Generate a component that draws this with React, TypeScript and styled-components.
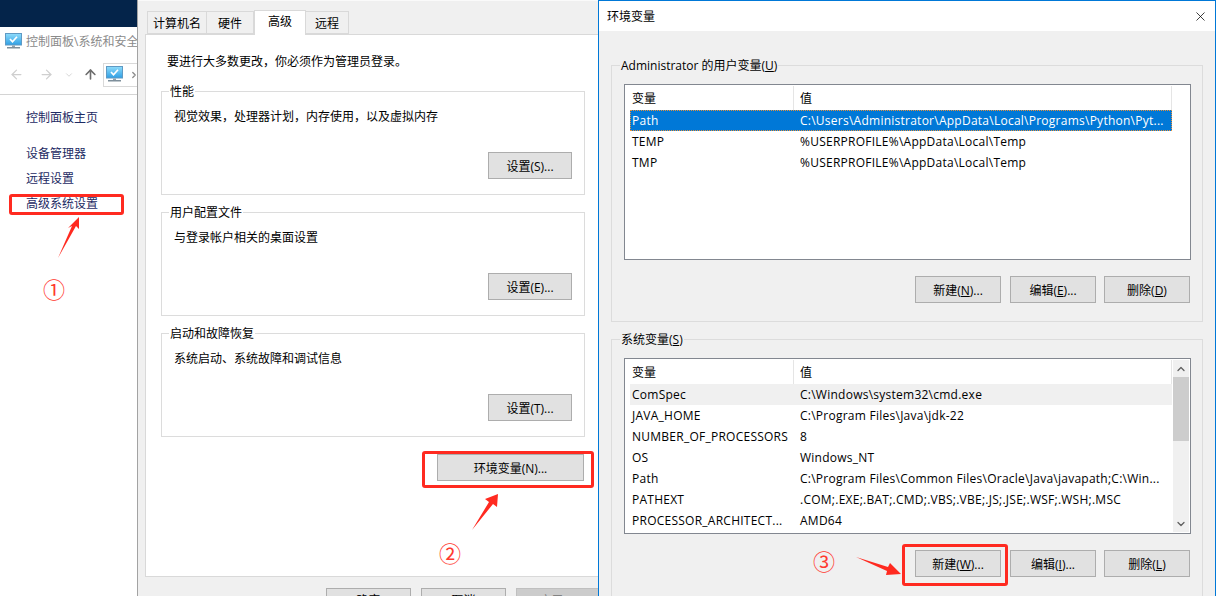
import React from 'react'
import styled, { createGlobalStyle } from 'styled-components'
import { ArrowLeft, ArrowRight, ArrowUp, ChevronDown, ChevronRight, ChevronUp, X } from 'lucide-react'

const GlobalStyle = createGlobalStyle`
  html, body {
    margin: 0;
    padding: 0;
    background: #fff;
  }
  * {
    box-sizing: border-box;
  }
  body {
    font-family: "Open Sans", "Noto Sans CJK SC", sans-serif;
    font-size: 12px;
    color: #000;
  }
`

const Page = styled.div`
  position: relative;
  display: flex;
  width: 1218px;
  height: 596px;
  overflow: hidden;
  background: #fff;
`

/* left: control panel */
const Sidebar = styled.aside`
  flex: none;
  width: 138px;
  border-right: 1px solid #a3a3a3;
  overflow: hidden;
`

const TopBar = styled.div`
  height: 27px;
  background: #04244a;
`

const TitleRow = styled.div`
  display: flex;
  align-items: center;
  gap: 4px;
  height: 28px;
  padding-left: 5px;
  color: #8a8a8a;
  white-space: nowrap;
`

const NavRow = styled.div`
  display: flex;
  align-items: center;
  height: 40px;
  padding-left: 9px;
  border-bottom: 1px solid #d4d4d4;
  color: #cfcfcf;
`

const NavButton = styled.span<{ $width: number; $left?: number; $dark?: boolean }>`
  display: flex;
  justify-content: center;
  width: ${p => p.$width}px;
  margin-left: ${p => p.$left ?? 0}px;
  flex: none;
  color: ${p => (p.$dark ? '#6d6d6d' : 'inherit')};
`

const Breadcrumb = styled.div`
  display: flex;
  align-items: center;
  gap: 6px;
  flex: none;
  width: 60px;
  height: 24px;
  margin-left: 5px;
  padding-left: 2px;
  border: 1px solid #d9d9d9;
  color: #8a8a8a;
`

const LinkList = styled.nav`
  display: flex;
  flex-direction: column;
  padding: 10px 0 0 26px;
`

const SideLink = styled.a<{ $gap?: number }>`
  height: 25px;
  line-height: 25px;
  margin-bottom: ${p => p.$gap ?? 0}px;
  color: #1d2a63;
  white-space: nowrap;
`

/* middle: system properties */
const Properties = styled.section`
  flex: none;
  display: flex;
  flex-direction: column;
  width: 460px;
  padding-left: 7px;
  background: #f0f0f0;
  border-top: 1px solid #fafafa;
  overflow: hidden;
`

const Tabs = styled.div`
  display: flex;
  flex: none;
  align-items: flex-end;
  height: 34px;
  padding-left: 2px;
  margin-bottom: -1px;
`

const Tab = styled.div<{ $width: number; $active?: boolean }>`
  position: relative;
  z-index: ${p => (p.$active ? 1 : 0)};
  display: flex;
  align-items: center;
  justify-content: center;
  flex: none;
  width: ${p => p.$width}px;
  height: ${p => (p.$active ? 25 : 23)}px;
  margin-bottom: ${p => (p.$active ? 0 : 1)}px;
  padding-bottom: ${p => (p.$active ? 4 : 0)}px;
  background: ${p => (p.$active ? '#fff' : '#f0f0f0')};
  border: 1px solid #d9d9d9;
  border-bottom: ${p => (p.$active ? 'none' : '1px solid #d9d9d9')};
  border-left: ${p => (p.$active ? '1px solid #d9d9d9' : 'none')};
  &:first-child {
    border-left: 1px solid #d9d9d9;
  }
`

const TabPage = styled.div`
  flex: none;
  height: 543px;
  width: 460px;
  padding: 16px 19px 0 15px;
  background: #fff;
  border: 1px solid #d9d9d9;
`

const Intro = styled.p`
  margin: 0 0 11px;
  padding: 1px 0 0 6px;
  line-height: 20px;
  white-space: nowrap;
`

const Group = styled.fieldset<{ $height: number; $gap?: number }>`
  display: block;
  min-width: 0;
  height: ${p => p.$height}px;
  margin: 0 0 ${p => p.$gap ?? 0}px;
  padding: 0;
  border: 1px solid #dcdcdc;
`

const Legend = styled.legend`
  height: 16px;
  margin-left: 7px;
  padding: 1px 1px 0;
  line-height: 16px;
  white-space: nowrap;
`

const GroupBody = styled.div`
  display: flex;
  flex-direction: column;
  padding: 8px 12px 0 12px;
`

const Description = styled.div`
  height: 20px;
  line-height: 20px;
  margin-bottom: 25px;
  white-space: nowrap;
`

const Button = styled.button<{ $width?: number; $disabled?: boolean }>`
  flex: none;
  width: ${p => p.$width ?? 85}px;
  height: 27px;
  padding: 0;
  font: inherit;
  color: ${p => (p.$disabled ? '#838383' : '#000')};
  background: ${p => (p.$disabled ? '#cccccc' : '#e1e1e1')};
  border: 1px solid ${p => (p.$disabled ? '#bfbfbf' : '#adadad')};
  border-radius: 0;
  white-space: nowrap;
  u {
    text-underline-offset: 1px;
  }
`

const RightButton = styled(Button)`
  align-self: flex-end;
`

const FooterButton = styled(Button)`
  padding-bottom: 4px;
`

const EnvRow = styled.div`
  display: flex;
  justify-content: flex-end;
  margin: 17px 1px 0 0;
`

const DialogFooter = styled.div`
  display: flex;
  gap: 10px;
  flex: none;
  margin-top: 11px;
  padding-left: 181px;
`

/* right: environment variables */
const EnvWindow = styled.section`
  flex: none;
  display: flex;
  flex-direction: column;
  width: 618px;
  height: 596px;
  background: #f0f0f0;
  border-top: 1px solid #0078d7;
  border-left: 1px solid #0078d7;
  border-right: 1px solid #0078d7;
  overflow: hidden;
`

const TitleBar = styled.header`
  display: flex;
  align-items: center;
  justify-content: space-between;
  flex: none;
  height: 30px;
  padding: 0 7px 0 8px;
  background: #fff;
`

const EnvBody = styled.div`
  padding: 26px 0 0 12px;
`

const EnvGroup = styled(Group)`
  width: 592px;
`

const EnvLegend = styled(Legend)`
  margin-left: 8px;
`

const EnvGroupBody = styled.div`
  display: flex;
  flex-direction: column;
  padding: 11px 0 0 12px;
`

const ListBox = styled.div`
  display: flex;
  width: 567px;
  height: 176px;
  padding: 1px 0 0 5px;
  background: #fff;
  border: 1px solid #828790;
`

const Rows = styled.div`
  flex: none;
  width: 542px;
`

const HeaderRow = styled.div`
  display: grid;
  grid-template-columns: 164px 1fr;
  height: 24px;
`

const HeaderCell = styled.div<{ $pad: number }>`
  display: flex;
  align-items: center;
  padding-left: ${p => p.$pad}px;
  border-right: 1px solid #e5e5e5;
`

const Row = styled.div<{ $state?: 'selected' | 'hover' }>`
  display: grid;
  grid-template-columns: 164px 1fr;
  height: 21px;
  line-height: 21px;
  letter-spacing: 0.25px;
  white-space: nowrap;
  overflow: hidden;
  color: ${p => (p.$state === 'selected' ? '#fff' : '#000')};
  background: ${p =>
    p.$state === 'selected' ? '#0078d7' : p.$state === 'hover' ? '#f0f0f0' : 'transparent'};
  outline: ${p => (p.$state === 'selected' ? '1px dotted #e8913a' : 'none')};
  outline-offset: -1px;
`

const NameCell = styled.span`
  padding-left: 2px;
`

const ValueCell = styled.span`
  padding-left: 6px;
`

const ScrollBar = styled.div`
  display: flex;
  flex-direction: column;
  flex: none;
  width: 16px;
  height: 172px;
  margin-left: 1px;
  background: #f0f0f0;
  color: #606060;
`

const ScrollArrow = styled.div`
  display: flex;
  align-items: center;
  justify-content: center;
  flex: none;
  height: 17px;
`

const ScrollThumb = styled.div`
  flex: none;
  height: 64px;
  background: #cdcdcd;
`

const ScrollSpace = styled.div`
  flex: 1;
`

const ButtonRow = styled.div`
  display: flex;
  justify-content: flex-end;
  gap: 9px;
  width: 566px;
  margin-top: 16px;
  button:last-child {
    margin-left: -1px;
  }
`

/* annotations on top of the screenshot */
const Overlay = styled.svg`
  position: absolute;
  inset: 0;
  pointer-events: none;
`

const Highlight = styled.div<{ $x: number; $y: number; $w: number; $h: number }>`
  position: absolute;
  left: ${p => p.$x}px;
  top: ${p => p.$y}px;
  width: ${p => p.$w}px;
  height: ${p => p.$h}px;
  border: 3px solid #ff2a20;
  border-radius: 3px;
`

const StepMark = styled.span<{ $x: number; $y: number }>`
  position: absolute;
  left: ${p => p.$x}px;
  top: ${p => p.$y}px;
  width: 24px;
  height: 24px;
  line-height: 24px;
  text-align: center;
  font-family: "Noto Sans CJK SC", sans-serif;
  font-size: 22px;
  color: #ff3a30;
`

function MonitorIcon({ id }: { id: string }) {
  return (
    <svg width="17" height="17" viewBox="0 0 17 17" style={{ flex: 'none' }}>
      <defs>
        <linearGradient id={id} x1="0" y1="0" x2="0" y2="1">
          <stop offset="0" stopColor="#8fdcfb" />
          <stop offset="1" stopColor="#2f9fe4" />
        </linearGradient>
      </defs>
      <rect x="0.5" y="0.5" width="16" height="11.5" fill={`url(#${id})`} stroke="#5f9ac4" />
      <path d="M5 6 L7.5 8.8 L12 3.8" fill="none" stroke="#fff" strokeWidth="1.7" />
      <rect x="7" y="12.5" width="3" height="1.5" fill="#8fa0ac" />
      <rect x="2" y="14" width="13" height="1.5" fill="#7e8f9b" />
    </svg>
  )
}

type SettingProps = { title: string; text: string; action: React.ReactNode; gap?: number }

function SettingGroup({ title, text, action, gap }: SettingProps) {
  return (
    <Group $height={112} $gap={gap}>
      <Legend>{title}</Legend>
      <GroupBody>
        <Description>{text}</Description>
        <RightButton $width={84}>{action}</RightButton>
      </GroupBody>
    </Group>
  )
}

const userVars = [
  ['Path', 'C:\\Users\\Administrator\\AppData\\Local\\Programs\\Python\\Pyt...'],
  ['TEMP', '%USERPROFILE%\\AppData\\Local\\Temp'],
  ['TMP', '%USERPROFILE%\\AppData\\Local\\Temp'],
]

const systemVars = [
  ['ComSpec', 'C:\\Windows\\system32\\cmd.exe'],
  ['JAVA_HOME', 'C:\\Program Files\\Java\\jdk-22'],
  ['NUMBER_OF_PROCESSORS', '8'],
  ['OS', 'Windows_NT'],
  ['Path', 'C:\\Program Files\\Common Files\\Oracle\\Java\\javapath;C:\\Win...'],
  ['PATHEXT', '.COM;.EXE;.BAT;.CMD;.VBS;.VBE;.JS;.JSE;.WSF;.WSH;.MSC'],
  ['PROCESSOR_ARCHITECT...', 'AMD64'],
]

function VarRows({ vars, first }: { vars: string[][]; first: 'selected' | 'hover' }) {
  return (
    <Rows>
      <HeaderRow>
        <HeaderCell $pad={2}>变量</HeaderCell>
        <HeaderCell $pad={6}>值</HeaderCell>
      </HeaderRow>
      {vars.map(([name, value], i) => (
        <Row key={name} $state={i === 0 ? first : undefined}>
          <NameCell>{name}</NameCell>
          <ValueCell>{value}</ValueCell>
        </Row>
      ))}
    </Rows>
  )
}

function App() {
  return (
    <Page>
      <GlobalStyle />
      <Sidebar>
        <TopBar />
        <TitleRow>
          <MonitorIcon id="screen-title" />
          控制面板\系统和安全
        </TitleRow>
        <NavRow>
          <NavButton $width={15}>
            <ArrowLeft size={15} />
          </NavButton>
          <NavButton $width={15} $left={15}>
            <ArrowRight size={15} />
          </NavButton>
          <NavButton $width={14} $left={8}>
            <ChevronDown size={10} />
          </NavButton>
          <NavButton $width={16} $left={6} $dark>
            <ArrowUp size={15} strokeWidth={2.6} />
          </NavButton>
          <Breadcrumb>
            <MonitorIcon id="screen-crumb" />
            <ChevronRight size={10} strokeWidth={3} />
          </Breadcrumb>
        </NavRow>
        <LinkList>
          <SideLink $gap={11}>控制面板主页</SideLink>
          <SideLink>设备管理器</SideLink>
          <SideLink>远程设置</SideLink>
          <SideLink>高级系统设置</SideLink>
        </LinkList>
      </Sidebar>

      <Properties>
        <Tabs>
          <Tab $width={60}>计算机名</Tab>
          <Tab $width={47}>硬件</Tab>
          <Tab $width={52} $active>
            高级
          </Tab>
          <Tab $width={43}>远程</Tab>
        </Tabs>
        <TabPage>
          <Intro>要进行大多数更改，你必须作为管理员登录。</Intro>
          <SettingGroup
            title="性能"
            text="视觉效果，处理器计划，内存使用，以及虚拟内存"
            action="设置(S)..."
            gap={9}
          />
          <SettingGroup
            title="用户配置文件"
            text="与登录帐户相关的桌面设置"
            action="设置(E)..."
            gap={9}
          />
          <SettingGroup
            title="启动和故障恢复"
            text="系统启动、系统故障和调试信息"
            action="设置(T)..."
          />
          <EnvRow>
            <Button $width={147}>环境变量(N)...</Button>
          </EnvRow>
        </TabPage>
        <DialogFooter>
          <FooterButton>确定</FooterButton>
          <FooterButton>取消</FooterButton>
          <FooterButton $disabled>应用(A)</FooterButton>
        </DialogFooter>
      </Properties>

      <EnvWindow>
        <TitleBar>
          环境变量
          <X size={15} strokeWidth={1.2} />
        </TitleBar>
        <EnvBody>
          <EnvGroup $height={265} $gap={9}>
            <EnvLegend>
              Administrator 的用户变量(<u>U</u>)
            </EnvLegend>
            <EnvGroupBody>
              <ListBox>
                <VarRows vars={userVars} first="selected" />
              </ListBox>
              <ButtonRow>
                <Button $width={86}>
                  新建(<u>N</u>)...
                </Button>
                <Button $width={86}>
                  编辑(<u>E</u>)...
                </Button>
                <Button $width={86}>
                  删除(<u>D</u>)
                </Button>
              </ButtonRow>
            </EnvGroupBody>
          </EnvGroup>
          <EnvGroup $height={300}>
            <EnvLegend>
              系统变量(<u>S</u>)
            </EnvLegend>
            <EnvGroupBody>
              <ListBox>
                <VarRows vars={systemVars} first="hover" />
                <ScrollBar>
                  <ScrollArrow>
                    <ChevronUp size={12} strokeWidth={2.6} />
                  </ScrollArrow>
                  <ScrollThumb />
                  <ScrollSpace />
                  <ScrollArrow>
                    <ChevronDown size={12} strokeWidth={2.6} />
                  </ScrollArrow>
                </ScrollBar>
              </ListBox>
              <ButtonRow>
                <Button $width={86}>
                  新建(<u>W</u>)...
                </Button>
                <Button $width={86}>
                  编辑(<u>I</u>)...
                </Button>
                <Button $width={86}>
                  删除(<u>L</u>)
                </Button>
              </ButtonRow>
            </EnvGroupBody>
          </EnvGroup>
        </EnvBody>
      </EnvWindow>

      <Highlight $x={9} $y={194} $w={115} $h={21} />
      <Highlight $x={422} $y={451} $w={172} $h={37} />
      <Highlight $x={902} $y={544} $w={106} $h={42} />

      <Overlay width="1218" height="596" viewBox="0 0 1218 596">
        <polygon points="58,258 72,226 68,228 79,217 79,229 76,226" fill="#ff2a20" />
        <polygon points="472,530 489,502 485,499 498,494 497,507 493,504" fill="#ff2a20" />
        <polygon points="856,557 888,567 890,563 901,574 886,575 887,571" fill="#ff2a20" />
      </Overlay>

      <StepMark $x={42} $y={276}>①</StepMark>
      <StepMark $x={438} $y={540}>②</StepMark>
      <StepMark $x={812} $y={548}>③</StepMark>
    </Page>
  )
}

export default App
